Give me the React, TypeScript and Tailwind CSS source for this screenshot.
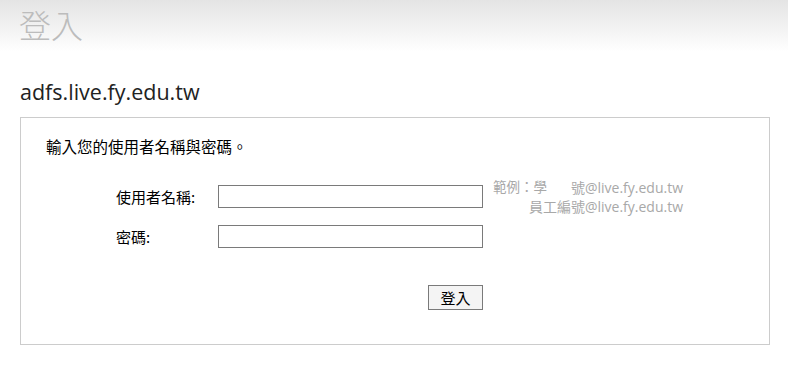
import React from "react";

const cjk = "font-['Noto_Sans_CJK_TC','Noto_Sans_CJK_SC',sans-serif]";

export default function App() {
  return (
    <div className="min-h-[365px] w-[788px] bg-white font-['Open_Sans','Noto_Sans_CJK_TC',sans-serif]">
      <div className="h-[52px] bg-gradient-to-b from-[#e4e4e4] to-white pl-[19px] pt-[4px]">
        <h1 className={`${cjk} text-[32px] leading-[40px] font-light text-[#bcbcbc]`}>登入</h1>
      </div>
      <h2 className="ml-[20px] mt-[25px] text-[21.5px] leading-[30px] text-[#222]">adfs.live.fy.edu.tw</h2>
      <div className="ml-[20px] mt-[10px] h-[228px] w-[750px] border border-[#cccccc] pl-[25px] pt-[18px]">
        <p className={`${cjk} text-[15.5px] leading-[20px] text-black`}>輸入您的使用者名稱與密碼。</p>
        <div className="mt-[29px] flex">
          <div className="flex flex-col">
            <div className="flex items-center">
              <label className={`${cjk} w-[102px] pl-[70px] box-content text-[15px] leading-[22px] text-black whitespace-nowrap`}>使用者名稱:</label>
              <input className="h-[23px] w-[265px] border border-[#7a7a7a] bg-white" />
            </div>
            <div className="mt-[17px] flex items-center">
              <label className={`${cjk} w-[102px] pl-[70px] box-content text-[15px] leading-[22px] text-black`}>密碼:</label>
              <input type="password" className="h-[23px] w-[265px] border border-[#7a7a7a] bg-white" />
            </div>
            <div className="mt-[37px] flex justify-end">
              <button className={`${cjk} h-[25px] w-[55px] border border-[#7a7a7a] bg-[#f4f4f4] text-[15px] leading-[20px] text-black`}>登入</button>
            </div>
          </div>
          <div className="ml-[10px] -mt-[7px] w-[190px] self-start text-right text-[13.5px] leading-[19px] text-[#a8a8a8] whitespace-nowrap">
            <div className="flex justify-between">
              <span>範例：學</span>
              <span className="text-[14px]">號@live.fy.edu.tw</span>
            </div>
            <div className="text-[14px]">員工編號@live.fy.edu.tw</div>
          </div>
        </div>
      </div>
    </div>
  );
}
